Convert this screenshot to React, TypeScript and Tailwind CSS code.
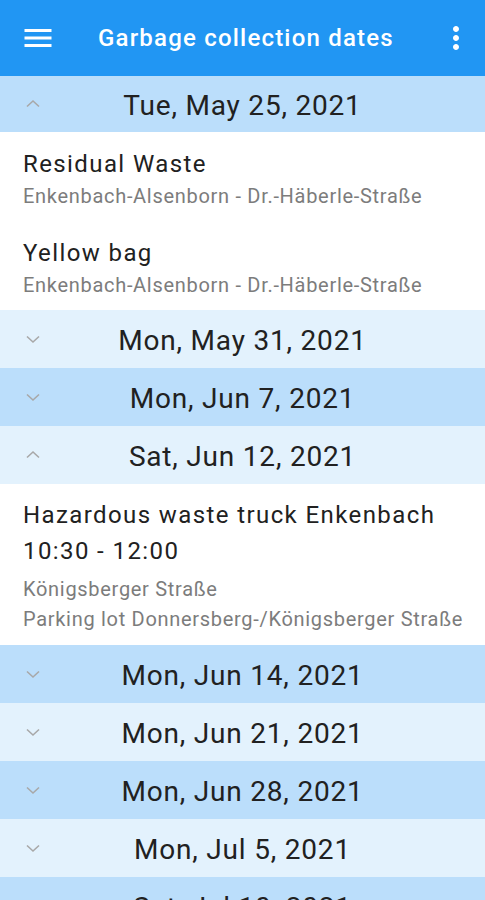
import React from 'react';

type Entry = { title: string; time?: string; lines: string[] };
type Day = { date: string; open: boolean; entries: Entry[] };

const street = 'Enkenbach-Alsenborn - Dr.-Häberle-Straße';

const days: Day[] = [
  {
    date: 'Tue, May 25, 2021',
    open: true,
    entries: [
      { title: 'Residual Waste', lines: [street] },
      { title: 'Yellow bag', lines: [street] },
    ],
  },
  { date: 'Mon, May 31, 2021', open: false, entries: [] },
  { date: 'Mon, Jun 7, 2021', open: false, entries: [] },
  {
    date: 'Sat, Jun 12, 2021',
    open: true,
    entries: [
      {
        title: 'Hazardous waste truck Enkenbach',
        time: '10:30 - 12:00',
        lines: ['Königsberger Straße', 'Parking lot Donnersberg-/Königsberger Straße'],
      },
    ],
  },
  { date: 'Mon, Jun 14, 2021', open: false, entries: [] },
  { date: 'Mon, Jun 21, 2021', open: false, entries: [] },
  { date: 'Mon, Jun 28, 2021', open: false, entries: [] },
  { date: 'Mon, Jul 5, 2021', open: false, entries: [] },
  { date: 'Sat, Jul 10, 2021', open: false, entries: [] },
];

const Chevron: React.FC<{ up: boolean }> = ({ up }) => (
  <svg width="18" height="18" viewBox="0 0 18 18" className="absolute left-[24px] top-1/2 -translate-y-1/2">
    <path
      d={up ? 'M3 11.5 L9 6 L15 11.5' : 'M3 6.5 L9 12 L15 6.5'}
      fill="none"
      stroke="#a8a8a8"
      strokeWidth="1.6"
    />
  </svg>
);

const EntryRow: React.FC<{ entry: Entry }> = ({ entry }) => {
  if (entry.time) {
    return (
      <div className="pl-[23px] pr-2 pt-[13px] pb-[11px] bg-white">
        <div className="text-[24px] leading-[36px] tracking-[1.4px] text-[#212121]">{entry.title}</div>
        <div className="text-[24px] leading-[36px] tracking-[1.4px] text-[#212121]">{entry.time}</div>
        <div className="mt-[5px]">
          {entry.lines.map((l) => (
            <div key={l} className="text-[20px] leading-[30px] tracking-[0.7px] text-[#7c7c7c] whitespace-nowrap">
              {l}
            </div>
          ))}
        </div>
      </div>
    );
  }
  return (
    <div className="pl-[23px] pr-2 pt-4 pb-[9px] bg-white">
      <div className="text-[24px] leading-8 tracking-[1.4px] text-[#212121]">{entry.title}</div>
      {entry.lines.map((l) => (
        <div key={l} className="text-[20px] leading-8 tracking-[0.7px] text-[#7c7c7c] whitespace-nowrap">
          {l}
        </div>
      ))}
    </div>
  );
};

export default function App() {
  return (
    <div className="w-[485px] h-[900px] overflow-hidden bg-white" style={{ fontFamily: 'Roboto, "Noto Sans", sans-serif' }}>
      <header className="h-[76px] bg-[#2196f3] flex items-center relative">
        <svg width="36" height="36" viewBox="0 0 24 24" className="absolute left-[20px] top-[20px]">
          <path d="M3 18h18v-2H3v2zm0-5h18v-2H3v2zm0-7v2h18V6H3z" fill="#fff" />
        </svg>
        <h1 className="ml-[98px] text-[24px] font-medium text-white tracking-[1.2px]">Garbage collection dates</h1>
        <svg width="36" height="36" viewBox="0 0 24 24" className="absolute right-[11px] top-[20px]">
          <path
            d="M12 8c1.1 0 2-.9 2-2s-.9-2-2-2-2 .9-2 2 .9 2 2 2zm0 2c-1.1 0-2 .9-2 2s.9 2 2 2 2-.9 2-2-.9-2-2-2zm0 6c-1.1 0-2 .9-2 2s.9 2 2 2 2-.9 2-2-.9-2-2-2z"
            fill="#fff"
          />
        </svg>
      </header>
      <main>
        {days.map((d, i) => (
          <section key={d.date}>
            <div
              className={`relative flex items-center justify-center text-[28px] tracking-[0.8px] text-[#212121] ${
                i === 0 ? 'h-[56px]' : 'h-[58px]'
              } ${i % 2 === 0 ? 'bg-[#bbdefb]' : 'bg-[#e3f2fd]'}`}
            >
              <Chevron up={d.open} />
              <span className="pt-[3px]">{d.date}</span>
            </div>
            {d.open && d.entries.map((e) => <EntryRow key={e.title} entry={e} />)}
          </section>
        ))}
      </main>
    </div>
  );
}
